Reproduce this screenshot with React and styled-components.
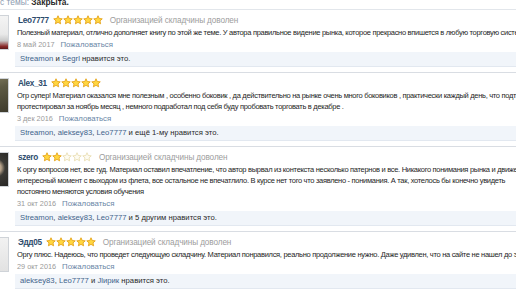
import React from 'react';
import styled, {createGlobalStyle} from 'styled-components';

const GlobalStyle = createGlobalStyle`
	body {
		margin: 0;
		background: #fff;
		font-family: "Liberation Sans", Arial, sans-serif;
		overflow: hidden;
	}
`;

const posts = [
	{
		name: 'Leo7777',
		stars: 5,
		note: 'Организацией складчины доволен',
		text: [
			'Полезный материал, отлично дополняет книгу по этой же теме. У автора правильное видение рынка, которое прекрасно впишется в любую торговую систему.',
		],
		date: '8 май 2017',
		likes: [['Streamon', ' и '], ['Segrl', '']],
		likesTail: ' нравится это.',
		avatar: 'light',
	},
	{
		name: 'Alex_31',
		stars: 5,
		note: '',
		text: [
			'Огр супер! Материал оказался мне полезным , особенно боковик , да действительно на рынке очень много боковиков , практически каждый день, что подтверждает',
			'протестировал за ноябрь месяц , немного подработал под себя буду пробовать торговать в декабре .',
		],
		date: '3 дек 2016',
		likes: [['Streamon', ', '], ['aleksey83', ', '], ['Leo7777', '']],
		likesTail: ' и ещё 1-му нравится это.',
		avatar: 'olive',
	},
	{
		name: 'szero',
		stars: 2,
		note: 'Организацией складчины доволен',
		text: [
			'К оргу вопросов нет, все гуд. Материал оставил впечатление, что автор вырвал из контекста несколько патернов и все. Никакого понимания рынка и движения',
			'интересный момент с выходом из флета, все остальное не впечатлило. В курсе нет того что заявлено - понимания. А так, хотелось бы конечно увидеть',
			'постоянно меняются условия обучения',
		],
		date: '31 окт 2016',
		likes: [['Streamon', ', '], ['aleksey83', ', '], ['Leo7777', '']],
		likesTail: ' и 5 другим нравится это.',
		avatar: 'dark',
	},
	{
		name: 'Эдд05',
		stars: 5,
		note: 'Организацией складчины доволен',
		text: [
			'Оргу плюс. Надеюсь, что проведет следующую складчину. Материал понравился, реально продолжение нужно. Даже удивлен, что на сайте не нашел до этого',
		],
		date: '29 окт 2016',
		likes: [['aleksey83', ', '], ['Leo7777', ' и '], ['Jlирик', '']],
		likesTail: ' нравится это.',
		avatar: 'empty',
	},
];

const Star = ({filled}) => (
	<svg width="10" height="10" viewBox="0 0 24 24">
		<path
			d="M12 1.8l3 6.6 7.2.8-5.4 4.9 1.5 7.1L12 17.6l-6.3 3.6 1.5-7.1L1.8 9.2 9 8.4z"
			fill={filled ? '#ffd640' : '#fdfbf2'}
			stroke={filled ? '#e39f12' : '#e8dcae'}
			strokeWidth="2"
			strokeLinejoin="round"
		/>
	</svg>
);

const App = () => {
	return (
		<Page>
			<GlobalStyle />
			<TopBar>
				<Muted>с темы:</Muted> <b>Закрыта.</b>
			</TopBar>
			{posts.map((p) => (
				<Post key={p.name}>
					<Avatar $kind={p.avatar} />
					<Body>
						<Head>
							<Name>{p.name}</Name>
							<Stars>
								{[0, 1, 2, 3, 4].map((i) => (
									<Star key={i} filled={i < p.stars} />
								))}
							</Stars>
							{p.note && <Note>{p.note}</Note>}
						</Head>
						{p.text.map((t, i) => (
							<Line key={i}>{t}</Line>
						))}
						<Meta>
							<span>{p.date}</span>
							<Report>Пожаловаться</Report>
						</Meta>
						<Likes>
							{p.likes.map(([n, sep]) => (
								<React.Fragment key={n}>
									<LikeName>{n}</LikeName>
									{sep}
								</React.Fragment>
							))}
							{p.likesTail}
						</Likes>
					</Body>
				</Post>
			))}
			<BottomBar>
				<Muted>Ответить:</Muted> <b>Закрыть</b>
			</BottomBar>
		</Page>
	);
};

export default App;

const Page = styled.div`
	width: 516px;
	height: 290px;
	overflow: hidden;
	font-size: 7.5px;
	color: #1e1e1e;
`;

const TopBar = styled.div`
	margin-top: -4px;
	height: 13px;
	line-height: 13px;
	border-bottom: 1px solid #e2e6eb;
	color: #2a2a2a;
	font-size: 8.4px;
	white-space: nowrap;
`;

const BottomBar = styled(TopBar)`
	margin-top: 0;
	border-bottom: none;
	padding-top: 3px;
`;

const Muted = styled.span`
	color: #8d9bb0;
`;

const Post = styled.div`
	display: flex;
	gap: 8px;
	margin-left: -28px;
	padding: 4px 0 5px;
	border-bottom: 1px solid #d9dde3;
	white-space: nowrap;
`;

const avatarFills = {
	light: 'linear-gradient(180deg, #f4f4f4 0%, #e9e9e9 55%, #c9c9c9 75%, #8a2a2a 92%, #5a1818 100%)',
	olive: 'linear-gradient(160deg, #8a8466 0%, #5d5a44 40%, #3e3b2d 100%)',
	dark: 'radial-gradient(circle at 65% 45%, #b8a48c 0 18%, #3b3a36 32%, #1d1c1a 100%)',
	empty: 'linear-gradient(180deg, #f2f2f2 0%, #e2e2e2 100%)',
};

const Avatar = styled.div`
	flex: none;
	width: 35px;
	height: 33px;
	margin-top: 1px;
	border: 1px solid #cfd3d8;
	background: ${(p) => avatarFills[p.$kind]};
`;

const Body = styled.div`
	flex: 1;
	display: flex;
	flex-direction: column;
	min-width: 0;
`;

const Head = styled.div`
	display: flex;
	align-items: center;
	height: 13px;
`;

const Name = styled.span`
	font-size: 8.2px;
	color: #2d4b6c;
	margin-left: 1px;
	letter-spacing: -0.3px;
	font-weight: bold;
`;

const Stars = styled.span`
	display: flex;
	margin-left: 4px;
	margin-top: -1px;
`;

const Note = styled.span`
	margin-left: 7px;
	color: #9d9d9d;
	font-size: 8.2px;
	letter-spacing: -0.1px;
`;

const Line = styled.div`
	line-height: 11px;
	letter-spacing: -0.3px;
	color: #1e1e1e;
`;

const Meta = styled.div`
	display: flex;
	gap: 6px;
	height: 12px;
	line-height: 12px;
	margin-top: 1px;
	color: #9a9a9a;
	font-size: 7.3px;
`;

const Report = styled.span`
	color: #6a86a6;
	font-size: 7.8px;
`;

const Likes = styled.div`
	margin: 1px 0 0 -2px;
	padding: 0 5px;
	height: 14px;
	line-height: 14px;
	background: #f1f5fa;
	border-bottom: 1px solid #e2e8f0;
	font-size: 7.7px;
	color: #2a2a2a;
`;

const LikeName = styled.span`
	color: #3f638a;
`;
